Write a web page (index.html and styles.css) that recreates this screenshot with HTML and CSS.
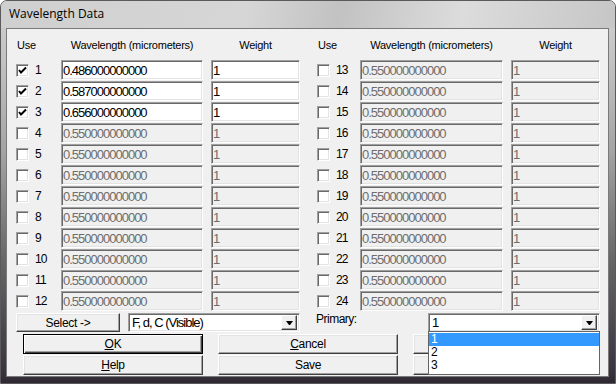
FILE: index.html
```html
<!DOCTYPE html>
<html lang="en">

<head>
    <meta charset="UTF-8" />
    <title>Wavelength Data</title>
    <link rel="stylesheet" href="styles.css">
</head>

<body>

    <div class="window">
        <!-- Title bar -->
        <div class="titlebar">Wavelength Data</div>

        <!-- Client area -->
        <div class="client">
            <div class="table">
                <!-- Left half: 1 - 12 -->
                <div class="half">
                    <div class="head head-use">Use</div>
                    <div class="head">Wavelength (micrometers)</div>
                    <div class="head">Weight</div>

                    <label class="use"><span class="check"><svg width="11" height="11" viewBox="0 0 11 11"><path d="M2 5 L4 7.5 L9 2.5" fill="none" stroke="#000" stroke-width="2"/></svg></span>1</label>
                    <input class="field" value="0.486000000000">
                    <input class="field" value="1">

                    <label class="use"><span class="check"><svg width="11" height="11" viewBox="0 0 11 11"><path d="M2 5 L4 7.5 L9 2.5" fill="none" stroke="#000" stroke-width="2"/></svg></span>2</label>
                    <input class="field" value="0.587000000000">
                    <input class="field" value="1">

                    <label class="use"><span class="check"><svg width="11" height="11" viewBox="0 0 11 11"><path d="M2 5 L4 7.5 L9 2.5" fill="none" stroke="#000" stroke-width="2"/></svg></span>3</label>
                    <input class="field" value="0.656000000000">
                    <input class="field" value="1">

                    <label class="use"><span class="check"></span>4</label>
                    <input class="field" value="0.550000000000" disabled>
                    <input class="field" value="1" disabled>

                    <label class="use"><span class="check"></span>5</label>
                    <input class="field" value="0.550000000000" disabled>
                    <input class="field" value="1" disabled>

                    <label class="use"><span class="check"></span>6</label>
                    <input class="field" value="0.550000000000" disabled>
                    <input class="field" value="1" disabled>

                    <label class="use"><span class="check"></span>7</label>
                    <input class="field" value="0.550000000000" disabled>
                    <input class="field" value="1" disabled>

                    <label class="use"><span class="check"></span>8</label>
                    <input class="field" value="0.550000000000" disabled>
                    <input class="field" value="1" disabled>

                    <label class="use"><span class="check"></span>9</label>
                    <input class="field" value="0.550000000000" disabled>
                    <input class="field" value="1" disabled>

                    <label class="use"><span class="check"></span>10</label>
                    <input class="field" value="0.550000000000" disabled>
                    <input class="field" value="1" disabled>

                    <label class="use"><span class="check"></span>11</label>
                    <input class="field" value="0.550000000000" disabled>
                    <input class="field" value="1" disabled>

                    <label class="use"><span class="check"></span>12</label>
                    <input class="field" value="0.550000000000" disabled>
                    <input class="field" value="1" disabled>
                </div>

                <!-- Right half: 13 - 24 -->
                <div class="half half-right">
                    <div class="head head-use">Use</div>
                    <div class="head">Wavelength (micrometers)</div>
                    <div class="head">Weight</div>

                    <label class="use"><span class="check"></span>13</label>
                    <input class="field" value="0.550000000000" disabled>
                    <input class="field" value="1" disabled>

                    <label class="use"><span class="check"></span>14</label>
                    <input class="field" value="0.550000000000" disabled>
                    <input class="field" value="1" disabled>

                    <label class="use"><span class="check"></span>15</label>
                    <input class="field" value="0.550000000000" disabled>
                    <input class="field" value="1" disabled>

                    <label class="use"><span class="check"></span>16</label>
                    <input class="field" value="0.550000000000" disabled>
                    <input class="field" value="1" disabled>

                    <label class="use"><span class="check"></span>17</label>
                    <input class="field" value="0.550000000000" disabled>
                    <input class="field" value="1" disabled>

                    <label class="use"><span class="check"></span>18</label>
                    <input class="field" value="0.550000000000" disabled>
                    <input class="field" value="1" disabled>

                    <label class="use"><span class="check"></span>19</label>
                    <input class="field" value="0.550000000000" disabled>
                    <input class="field" value="1" disabled>

                    <label class="use"><span class="check"></span>20</label>
                    <input class="field" value="0.550000000000" disabled>
                    <input class="field" value="1" disabled>

                    <label class="use"><span class="check"></span>21</label>
                    <input class="field" value="0.550000000000" disabled>
                    <input class="field" value="1" disabled>

                    <label class="use"><span class="check"></span>22</label>
                    <input class="field" value="0.550000000000" disabled>
                    <input class="field" value="1" disabled>

                    <label class="use"><span class="check"></span>23</label>
                    <input class="field" value="0.550000000000" disabled>
                    <input class="field" value="1" disabled>

                    <label class="use"><span class="check"></span>24</label>
                    <input class="field" value="0.550000000000" disabled>
                    <input class="field" value="1" disabled>
                </div>
            </div>

            <!-- Select / Primary -->
            <div class="select-row">
                <button class="btn select-btn">Select -&gt;</button>
                <div class="combo combo-set">
                    <span class="combo-text">F, d, C (Visible)</span>
                    <span class="arrow"></span>
                </div>
                <span class="primary-label">Primary:</span>
                <div class="combo combo-primary">
                    <span class="combo-text">1</span>
                    <span class="arrow"></span>
                    <ul class="dropdown">
                        <li class="selected">1</li>
                        <li>2</li>
                        <li>3</li>
                    </ul>
                </div>
            </div>

            <!-- Dialog buttons -->
            <div class="buttons">
                <button class="btn btn-default"><u>O</u>K</button>
                <button class="btn"><u>C</u>ancel</button>
                <button class="btn"></button>
                <button class="btn"><u>H</u>elp</button>
                <button class="btn">Save</button>
                <button class="btn"></button>
            </div>
        </div>
    </div>

</body>

</html>
```

FILE: styles.css
```css
* {
    margin: 0;
    padding: 0;
    box-sizing: border-box;
}

body {
    background-color: #ffffff;
    font-family: "Liberation Sans", Arial, sans-serif;
    font-size: 12px;
    color: #000;
}

/* Window frame */
.window {
    width: 616px;
    height: 384px;
    display: flex;
    flex-direction: column;
    border: 1px solid #5a5a5a;
    border-radius: 7px 7px 0 0;
    padding: 0 6px 6px 5px;
    background: linear-gradient(to bottom, #d2d2d2 0, #c2c2c2 60px, #a4a4a4 150px, #666 260px, #3a3440 370px, #2c2630 384px);
}

.titlebar {
    height: 27px;
    line-height: 26px;
    margin: 0 -6px 0 -5px;
    padding-left: 8px;
    font-family: "Open Sans", "Noto Sans", sans-serif;
    font-size: 12px;
    color: #000;
    border-radius: 6px 6px 0 0;
    background: linear-gradient(100deg, #cfcfcf 0, #d6d6d6 40%, #c2c2c2 55%, #dcdcdc 75%, #c6c6c6 100%);
}

/* Client area */
.client {
    flex: 1;
    background-color: #f0f0f0;
    border: 1px solid #7a7a7a;
    padding: 8px 8px 0 9px;
}

.table {
    display: flex;
    gap: 17px;
}

.half {
    display: grid;
    grid-template-columns: 37px 142px 89px;
    grid-template-rows: 22px repeat(12, 20px);
    column-gap: 8px;
    row-gap: 1px;
}

.half-right {
    grid-template-columns: 35px 143px 89px;
}

.head {
    text-align: center;
    line-height: 16px;
    font-size: 11px;
    letter-spacing: -0.25px;
}

.head-use {
    text-align: left;
    padding-left: 1px;
}

.use {
    display: flex;
    align-items: center;
    gap: 6px;
    font-size: 12px;
    letter-spacing: -0.8px;
}

.check {
    width: 13px;
    height: 13px;
    display: flex;
    align-items: center;
    justify-content: center;
    background-color: #fff;
    border: 1px solid;
    border-color: #a0a0a0 #fff #fff #a0a0a0;
    box-shadow: inset 1px 1px #696969, inset -1px -1px #e3e3e3;
}

.field {
    width: 100%;
    height: 20px;
    padding: 0 1px;
    font-family: inherit;
    font-size: 13px;
    letter-spacing: -1px;
    color: #000;
    background-color: #fff;
    border: 1px solid;
    border-color: #a0a0a0 #fff #fff #a0a0a0;
    box-shadow: inset 1px 1px #696969, inset -1px -1px #e3e3e3;
    outline: none;
}

.field:disabled {
    background-color: #f0f0f0;
    color: #6d6d6d;
}

/* Buttons */
.btn {
    height: 20px;
    font-family: inherit;
    font-size: 12px;
    letter-spacing: -0.3px;
    color: #000;
    background-color: #f0f0f0;
    border: 1px solid;
    border-color: #fff #404040 #404040 #fff;
    box-shadow: inset -1px -1px #a0a0a0, inset 1px 1px #e3e3e3;
}

.btn-default {
    border-color: #000;
    box-shadow: inset 1px 1px #fff, inset -1px -1px #404040, inset -2px -2px #a0a0a0;
}

/* Select row */
.select-row {
    display: flex;
    align-items: flex-start;
    margin-top: 2px;
    height: 19px;
}

.select-btn {
    width: 104px;
    height: 19px;
    margin-right: 8px;
}

.combo {
    position: relative;
    width: 172px;
    height: 19px;
    display: flex;
    align-items: center;
    justify-content: space-between;
    padding: 2px 2px 2px 3px;
    background-color: #fff;
    border: 1px solid;
    border-color: #a0a0a0 #fff #fff #a0a0a0;
    box-shadow: inset 1px 1px #696969, inset -1px -1px #e3e3e3;
    font-size: 13px;
    letter-spacing: -1px;
}

.arrow {
    width: 16px;
    height: 15px;
    display: flex;
    align-items: center;
    justify-content: center;
    background-color: #f0f0f0;
    border: 1px solid;
    border-color: #fff #404040 #404040 #fff;
    box-shadow: inset -1px -1px #a0a0a0;
}

.arrow::after {
    content: "";
    width: 1px;
    border-top: 4px solid #000;
    border-left: 3px solid transparent;
    border-right: 3px solid transparent;
}

.primary-label {
    margin-left: 16px;
    line-height: 13px;
    letter-spacing: -0.5px;
}

.combo-primary {
    margin-left: auto;
}

.dropdown {
    position: absolute;
    top: 100%;
    left: -1px;
    right: -1px;
    list-style: none;
    background-color: #fff;
    border: 1px solid #646464;
    padding: 1px 0 2px;
    z-index: 10;
}

.dropdown li {
    height: 13px;
    line-height: 13px;
    padding-left: 2px;
    font-size: 12px;
    letter-spacing: 0;
}

.dropdown .selected {
    background-color: #3399ff;
    color: #fff;
}

/* Dialog buttons */
.buttons {
    display: grid;
    grid-template-columns: repeat(3, 180px);
    column-gap: 15px;
    row-gap: 1px;
    margin-top: 2px;
    margin-left: 7px;
}
```
